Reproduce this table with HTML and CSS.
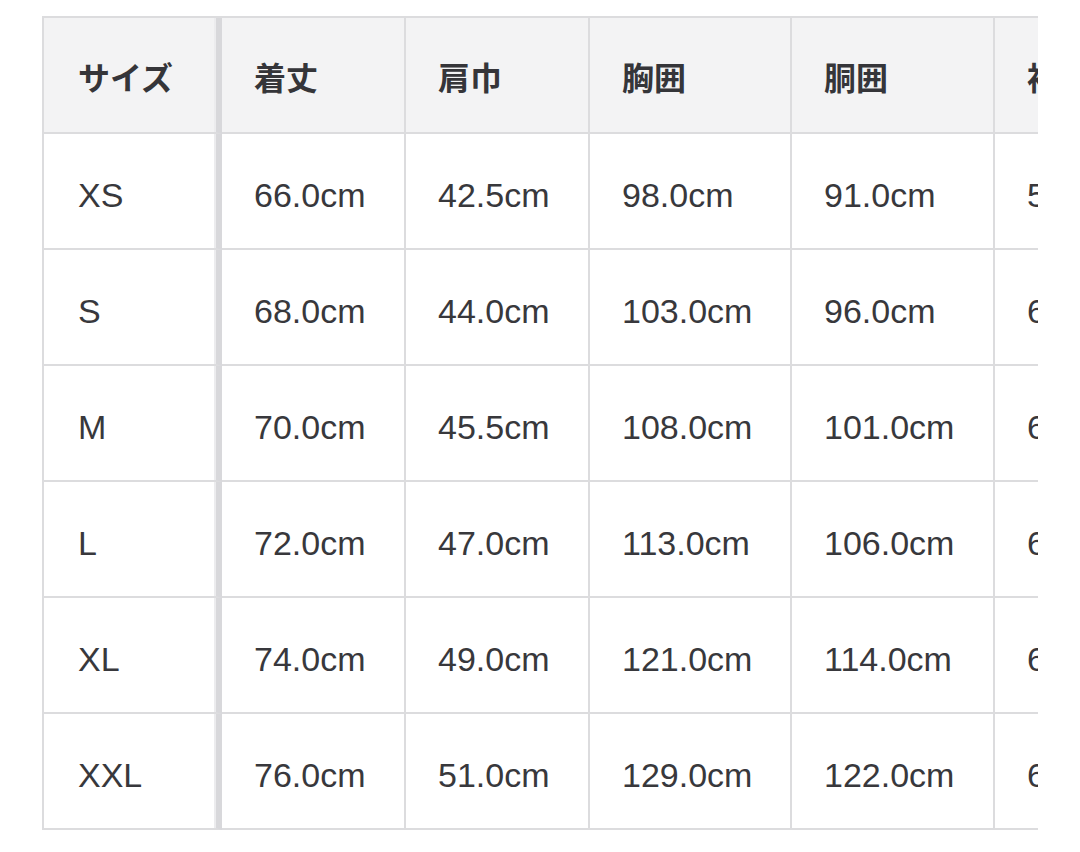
FILE: index.html
```html
<!DOCTYPE html>
<html lang="ja">
<head>
<meta charset="utf-8">
<link rel="stylesheet" href="styles.css">
</head>
<body>
<div class="wrap">
  <table class="size-table">
    <colgroup>
      <col class="c1"><col class="c2"><col class="c3"><col class="c4"><col class="c5"><col class="c6">
    </colgroup>
    <thead>
      <tr><th class="first">サイズ</th><th>着丈</th><th>肩巾</th><th>胸囲</th><th>胴囲</th><th>袖丈</th></tr>
    </thead>
    <tbody>
      <tr><td class="first">XS</td><td>66.0cm</td><td>42.5cm</td><td>98.0cm</td><td>91.0cm</td><td>58.0cm</td></tr>
      <tr><td class="first">S</td><td>68.0cm</td><td>44.0cm</td><td>103.0cm</td><td>96.0cm</td><td>60.0cm</td></tr>
      <tr><td class="first">M</td><td>70.0cm</td><td>45.5cm</td><td>108.0cm</td><td>101.0cm</td><td>61.5cm</td></tr>
      <tr><td class="first">L</td><td>72.0cm</td><td>47.0cm</td><td>113.0cm</td><td>106.0cm</td><td>63.0cm</td></tr>
      <tr><td class="first">XL</td><td>74.0cm</td><td>49.0cm</td><td>121.0cm</td><td>114.0cm</td><td>64.5cm</td></tr>
      <tr><td class="first">XXL</td><td>76.0cm</td><td>51.0cm</td><td>129.0cm</td><td>122.0cm</td><td>66.0cm</td></tr>
    </tbody>
  </table>
</div>
</body>
</html>
```

FILE: styles.css
```css
html, body {
  margin: 0;
  padding: 0;
  background: #ffffff;
}

body {
  font-family: "Liberation Sans", "Noto Sans CJK JP", sans-serif;
  color: #38383c;
}

.wrap {
  margin: 16px 0 0 42px;
  width: 996px;
  overflow: hidden;
}

.size-table {
  table-layout: fixed;
  border-collapse: separate;
  border-spacing: 0;
  width: 1160px;
  border-top: 2px solid #dcdcde;
  border-left: 2px solid #dcdcde;
}

.c1 { width: 178px; }
.c2 { width: 184px; }
.c3 { width: 184px; }
.c4 { width: 202px; }
.c5 { width: 203px; }
.c6 { width: 207px; }

.size-table th,
.size-table td {
  box-sizing: border-box;
  height: 116px;
  padding: 0 0 0 32px;
  text-align: left;
  vertical-align: middle;
  border-right: 2px solid #dcdcde;
  border-bottom: 2px solid #dcdcde;
  white-space: nowrap;
  overflow: hidden;
}

.size-table th {
  background: #f3f3f4;
  font-family: "Noto Sans CJK JP", "Liberation Sans", sans-serif;
  font-weight: 700;
  font-size: 32px;
  color: #353539;
  padding-top: 2px;
}

.size-table td {
  font-size: 34px;
  font-weight: 400;
  padding-top: 8px;
}

.size-table .first {
  padding-left: 34px;
  border-right: 6px solid #d8d8db;
  box-shadow: inset -2px 0 0 #ececee;
}
```
